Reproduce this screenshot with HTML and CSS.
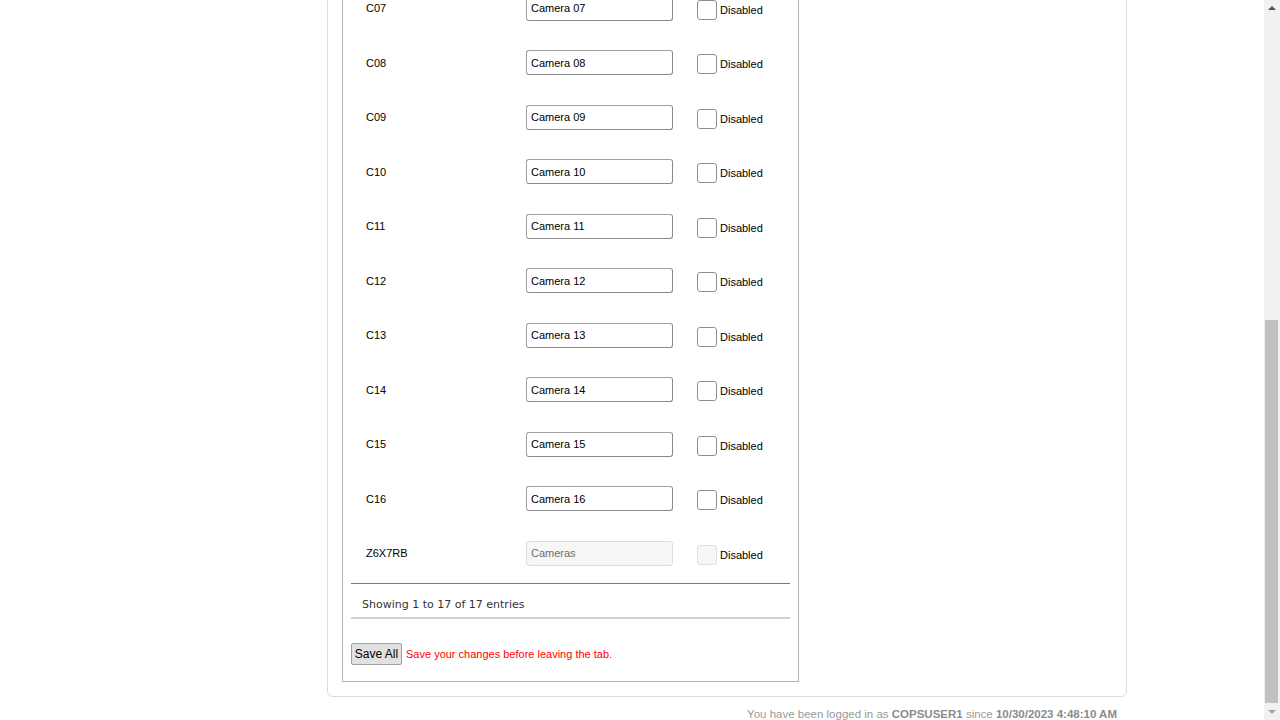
FILE: index.html
```html
<!DOCTYPE html>
<html>
<head>
<meta charset="utf-8">
<link rel="stylesheet" href="styles.css">
</head>
<body>
<div class="viewport">
  <div class="page">
    <div class="outer">
      <div class="panel">
        <div class="rows">
          <div class="row"><span class="lbl">C07</span><span><input class="txt" type="text" value="Camera 07"></span><label class="chk"><span class="box"></span>Disabled</label></div>
          <div class="row"><span class="lbl">C08</span><span><input class="txt" type="text" value="Camera 08"></span><label class="chk"><span class="box"></span>Disabled</label></div>
          <div class="row"><span class="lbl">C09</span><span><input class="txt" type="text" value="Camera 09"></span><label class="chk"><span class="box"></span>Disabled</label></div>
          <div class="row"><span class="lbl">C10</span><span><input class="txt" type="text" value="Camera 10"></span><label class="chk"><span class="box"></span>Disabled</label></div>
          <div class="row"><span class="lbl">C11</span><span><input class="txt" type="text" value="Camera 11"></span><label class="chk"><span class="box"></span>Disabled</label></div>
          <div class="row"><span class="lbl">C12</span><span><input class="txt" type="text" value="Camera 12"></span><label class="chk"><span class="box"></span>Disabled</label></div>
          <div class="row"><span class="lbl">C13</span><span><input class="txt" type="text" value="Camera 13"></span><label class="chk"><span class="box"></span>Disabled</label></div>
          <div class="row"><span class="lbl">C14</span><span><input class="txt" type="text" value="Camera 14"></span><label class="chk"><span class="box"></span>Disabled</label></div>
          <div class="row"><span class="lbl">C15</span><span><input class="txt" type="text" value="Camera 15"></span><label class="chk"><span class="box"></span>Disabled</label></div>
          <div class="row"><span class="lbl">C16</span><span><input class="txt" type="text" value="Camera 16"></span><label class="chk"><span class="box"></span>Disabled</label></div>
          <div class="row"><span class="lbl">Z6X7RB</span><span><input class="txt txt-off" type="text" value="Cameras" disabled></span><label class="chk"><span class="box box-off"></span>Disabled</label></div>
        </div>
        <div class="info">Showing 1 to 17 of 17 entries</div>
        <div class="actions">
          <button class="save" type="button">Save All</button>
          <span class="warn">Save your changes before leaving the tab.</span>
        </div>
      </div>
    </div>
    <div class="footer">You have been logged in as <b>COPSUSER1</b> since <b>10/30/2023 4:48:10 AM</b></div>
  </div>
</div>
<div class="scrollbar">
  <div class="arrow arrow-up"></div>
  <div class="track"><div class="thumb"></div></div>
  <div class="arrow arrow-down"></div>
</div>
</body>
</html>
```
FILE: styles.css
```css
html, body {
  margin: 0;
  padding: 0;
  height: 720px;
  overflow: hidden;
  background: #fff;
}
body {
  display: flex;
  font-family: "Liberation Sans", Arial, sans-serif;
  font-size: 11px;
  color: #000;
}
.viewport {
  flex: 1;
  overflow: hidden;
}
.page {
  margin-left: 327px;
  width: 800px;
  margin-top: -43.25px;
}
.outer {
  box-sizing: border-box;
  width: 800px;
  border: 1px solid #dcdcdc;
  border-radius: 6px;
  padding: 14px;
}
.panel {
  box-sizing: border-box;
  width: 457px;
  border: 1px solid #b4b4b4;
  padding: 8px 8px 16px 8px;
}
.rows {
  display: grid;
  grid-auto-rows: 54.5px;
}
.row {
  display: grid;
  grid-template-columns: 175px 171px 1fr;
  align-items: center;
}
.lbl {
  padding-left: 15px;
  padding-top: 1px;
  line-height: 13px;
}
.txt {
  box-sizing: border-box;
  width: 147px;
  height: 25px;
  margin: 0;
  padding: 0 4px;
  border: 1px solid #8a8a8a;
  border-top-color: #a0a0a0;
  border-left-color: #a0a0a0;
  border-radius: 3px;
  font-family: "Liberation Sans", Arial, sans-serif;
  font-size: 11px;
  color: #000;
  background: #fff;
  display: block;
  outline: none;
}
.txt-off {
  background: #f7f7f7;
  border-color: #dcdcdc;
  color: #6d6d6d;
}
.chk {
  display: flex;
  align-items: center;
  gap: 3px;
  margin-top: 3px;
}
.box {
  box-sizing: border-box;
  width: 20px;
  height: 20px;
  border: 1px solid #8f8f8f;
  border-radius: 3px;
  background: #fff;
}
.box-off {
  border-color: #e0e0e0;
  background: #f6f6f6;
}
.info {
  margin-top: 3px;
  border-top: 1px solid #7a7a7a;
  padding: 14px 0 6px 11px;
  line-height: 13px;
  font-family: "DejaVu Sans", Verdana, sans-serif;
  font-size: 11px;
  color: #333;
}
.actions {
  border-top: 2px solid #d2d2d2;
  padding-top: 24px;
  display: flex;
  align-items: center;
  gap: 4px;
}
.save {
  box-sizing: border-box;
  height: 22px;
  width: 51px;
  margin: 0;
  padding: 0;
  border: 1px solid #a0a0a0;
  border-radius: 2px;
  background: #e1e1e1;
  font-family: "Liberation Sans", Arial, sans-serif;
  font-size: 12px;
  color: #000;
}
.warn {
  color: #ff0000;
  font-size: 11px;
}
.footer {
  box-sizing: border-box;
  width: 800px;
  padding-right: 10px;
  margin-top: 11px;
  text-align: right;
  color: #9a9a9a;
  font-size: 11.5px;
  line-height: 13px;
}
.footer b {
  color: #8c8c8c;
}
.scrollbar {
  width: 16px;
  flex: 0 0 16px;
  height: 720px;
  background: #f1f1f1;
  display: flex;
  flex-direction: column;
}
.arrow {
  height: 16px;
  flex: 0 0 16px;
  display: flex;
  align-items: center;
  justify-content: center;
}
.arrow-up::after {
  content: "";
  border-left: 4px solid transparent;
  border-right: 4px solid transparent;
  border-bottom: 4px solid #505050;
}
.arrow-down::after {
  content: "";
  border-left: 4px solid transparent;
  border-right: 4px solid transparent;
  border-top: 4px solid #a3a3a3;
}
.track {
  flex: 1;
  padding-top: 304px;
  padding-left: 1px;
  padding-right: 2px;
}
.thumb {
  height: 383px;
  background: #c1c1c1;
}
```
